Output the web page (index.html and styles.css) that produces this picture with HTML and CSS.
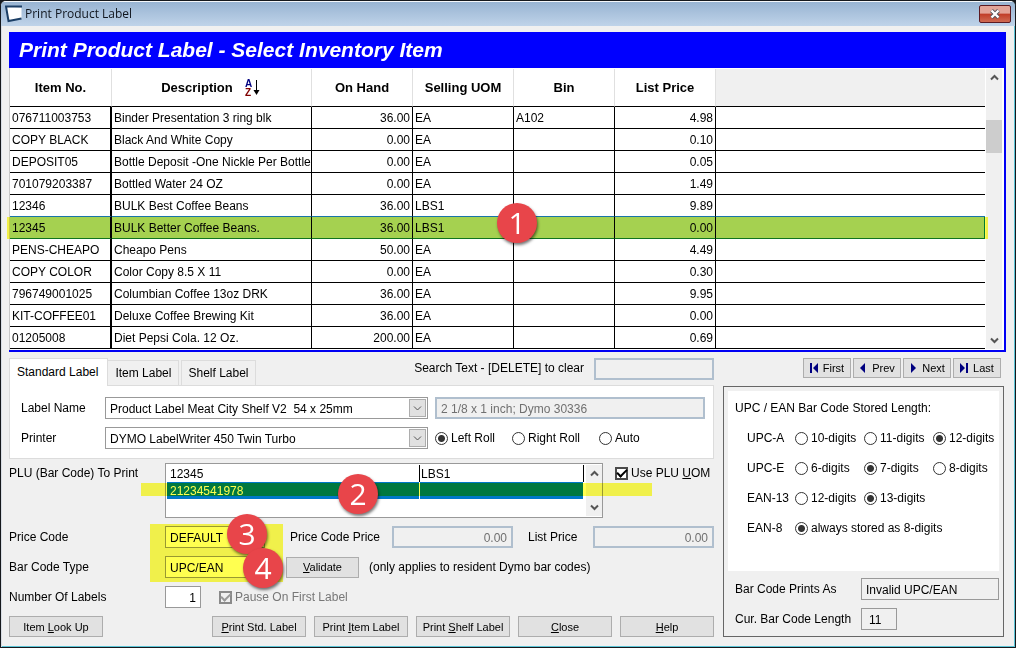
FILE: index.html
```html
<!DOCTYPE html>
<html lang="en">
<head>
<meta charset="utf-8">
<title>Print Product Label</title>
<link rel="stylesheet" href="styles.css">
</head>
<body>
<div class="window">
  <header class="titlebar">
    <svg class="app-icon" width="18" height="18" viewBox="0 0 18 18"><path d="M1.500 1.500L16.500 2.500V14L3.500 16Z" fill="#fff"/><path d="M17 1.500L1 1.500L3.500 16L16.500 13.500" fill="none" stroke="#1c3f66" stroke-width="2"/></svg>
    <span class="window-name">Print Product Label</span>
    <button class="close" aria-label="Close window"><svg width="12" height="10" viewBox="0 0 12 10"><path d="M2.500 1.500L9.500 8.500M9.500 1.500L2.500 8.500" stroke="#54545c" stroke-width="4"/><path d="M2.500 1.500L9.500 8.500M9.500 1.500L2.500 8.500" stroke="#fff" stroke-width="2.400"/></svg></button>
  </header>

  <main class="content">
    <section class="inventory">
      <h1>Print Product Label - Select Inventory Item</h1>
      <div class="list">
        <table class="items">
          <colgroup><col class="c-item"><col class="c-desc"><col class="c-std"><col class="c-std"><col class="c-std"><col class="c-std"><col></colgroup>
          <thead>
            <tr><th>Item No.</th><th><span class="sorted">Description<svg width="17" height="18" viewBox="0 0 17 18"><text x="0" y="8" class="sort-a">A</text><text x="0" y="17" class="sort-z">Z</text><path d="M11.500 1V15" stroke="#000"/><path d="M8.500 11H14.500L11.500 16Z"/></svg></span></th><th>On Hand</th><th>Selling UOM</th><th>Bin</th><th>List Price</th><th class="blank"></th></tr>
          </thead>
          <tbody>
            <tr><td>076711003753</td><td>Binder Presentation 3 ring blk</td><td>36.00</td><td>EA</td><td>A102</td><td>4.98</td><td></td></tr>
            <tr><td>COPY BLACK</td><td>Black And White Copy</td><td>0.00</td><td>EA</td><td></td><td>0.10</td><td></td></tr>
            <tr><td>DEPOSIT05</td><td>Bottle Deposit -One Nickle Per Bottle</td><td>0.00</td><td>EA</td><td></td><td>0.05</td><td></td></tr>
            <tr><td>701079203387</td><td>Bottled Water 24 OZ</td><td>0.00</td><td>EA</td><td></td><td>1.49</td><td></td></tr>
            <tr class="before"><td>12346</td><td>BULK Best Coffee Beans</td><td>36.00</td><td>LBS1</td><td></td><td>9.89</td><td></td></tr>
            <tr class="selected"><td>12345</td><td>BULK Better Coffee Beans.</td><td>36.00</td><td>LBS1</td><td></td><td>0.00</td><td></td></tr>
            <tr><td>PENS-CHEAPO</td><td>Cheapo Pens</td><td>50.00</td><td>EA</td><td></td><td>4.49</td><td></td></tr>
            <tr><td>COPY COLOR</td><td>Color Copy 8.5 X 11</td><td>0.00</td><td>EA</td><td></td><td>0.30</td><td></td></tr>
            <tr><td>796749001025</td><td>Columbian Coffee 13oz DRK</td><td>36.00</td><td>EA</td><td></td><td>9.95</td><td></td></tr>
            <tr><td>KIT-COFFEE01</td><td>Deluxe Coffee Brewing Kit</td><td>36.00</td><td>EA</td><td></td><td>0.00</td><td></td></tr>
            <tr><td>01205008</td><td>Diet Pepsi Cola. 12 Oz.</td><td>200.00</td><td>EA</td><td></td><td>0.69</td><td></td></tr>
          </tbody>
        </table>
        <div class="scrollbar">
          <button aria-label="Scroll up"><svg width="9" height="7" viewBox="0 0 9 7"><path d="M1 5.500L4.500 2L8 5.500"/></svg></button>
          <div class="track"><div class="thumb"></div></div>
          <button aria-label="Scroll down"><svg width="9" height="7" viewBox="0 0 9 7"><path d="M1 1.500L4.500 5L8 1.500"/></svg></button>
        </div>
      </div>
      <div class="marker marker-row"></div>
      <div class="badge badge-1">1</div>
    </section>

    <div class="details">
      <section class="settings">
        <div class="tab-bar">
          <div class="tabs" role="tablist">
            <button class="tab active" role="tab" aria-selected="true">Standard Label</button>
            <button class="tab" role="tab">Item Label</button>
            <button class="tab" role="tab">Shelf Label</button>
          </div>
          <label class="search-label" for="search">Search Text - [DELETE] to clear</label>
          <input id="search" class="field locked search" type="text">
        </div>
        <div class="tab-panel">
          <label for="label-name">Label Name</label>
          <div class="combo"><select id="label-name"><option>Product Label Meat City Shelf V2 &nbsp;54 x 25mm</option></select><span class="combo-arrow"><svg width="9" height="7" viewBox="0 0 9 7"><path d="M1 1.500L4.500 5L8 1.500"/></svg></span></div>
          <input class="field locked" type="text" aria-label="Label size" value="2 1/8 x 1 inch; Dymo 30336" readonly>
          <label for="printer">Printer</label>
          <div class="combo"><select id="printer"><option>DYMO LabelWriter 450 Twin Turbo</option></select><span class="combo-arrow"><svg width="9" height="7" viewBox="0 0 9 7"><path d="M1 1.500L4.500 5L8 1.500"/></svg></span></div>
          <div class="rolls">
            <label class="choice"><input type="radio" name="roll" checked>Left Roll</label>
            <label class="choice"><input type="radio" name="roll">Right Roll</label>
            <label class="choice"><input type="radio" name="roll">Auto</label>
          </div>
        </div>

        <div class="form">
          <div class="row plu-row">
            <span class="caption">PLU (Bar Code) To Print</span>
            <div class="plu">
              <table>
                <colgroup><col class="c-plu"><col></colgroup>
                <tr><td>12345</td><td>LBS1</td></tr>
                <tr class="current"><td>21234541978</td><td></td></tr>
              </table>
              <div class="scrollbar">
                <button aria-label="PLU up"><svg width="9" height="7" viewBox="0 0 9 7"><path d="M1 5.500L4.500 2L8 5.500"/></svg></button>
                <div class="track"></div>
                <button aria-label="PLU down"><svg width="9" height="7" viewBox="0 0 9 7"><path d="M1 1.500L4.500 5L8 1.500"/></svg></button>
              </div>
            </div>
            <label class="choice uom"><input type="checkbox" checked><span>Use PLU <u>U</u>OM</span></label>
          </div>
          <div class="row">
            <label class="caption" for="price-code">Price Code</label>
            <input id="price-code" class="field code" type="text" value="DEFAULT">
            <label class="price-label" for="code-price">Price Code Price</label>
            <input id="code-price" class="field locked price" type="text" value="0.00" readonly>
            <label class="list-label" for="list-price">List Price</label>
            <input id="list-price" class="field locked price" type="text" value="0.00" readonly>
          </div>
          <div class="row">
            <label class="caption" for="code-type">Bar Code Type</label>
            <input id="code-type" class="field code" type="text" value="UPC/EAN">
            <button class="btn validate"><span><u>V</u>alidate</span></button>
            <span>(only applies to resident Dymo bar codes)</span>
          </div>
          <div class="row">
            <label class="caption" for="count">Number Of Labels</label>
            <input id="count" class="field count" type="text" value="1">
            <label class="choice pause"><input type="checkbox" checked disabled>Pause On First Label</label>
          </div>
          <div class="row actions">
            <button class="btn"><span>Item <u>L</u>ook Up</span></button>
            <div class="action-group">
              <button class="btn"><span><u>P</u>rint Std. Label</span></button>
              <button class="btn"><span>Print <u>I</u>tem Label</span></button>
              <button class="btn"><span>Print <u>S</u>helf Label</span></button>
              <button class="btn"><span><u>C</u>lose</span></button>
              <button class="btn"><span><u>H</u>elp</span></button>
            </div>
          </div>
        </div>
        <div class="marker marker-plu"></div>
        <div class="marker marker-codes"></div>
        <div class="badge badge-2">2</div>
        <div class="badge badge-3">3</div>
        <div class="badge badge-4">4</div>
      </section>

      <aside class="side">
        <nav class="pager">
          <button class="btn nav"><svg width="9" height="10" viewBox="0 0 9 10"><path d="M0 0H2V10H0ZM8 0V10L3 5Z"/></svg>First</button>
          <button class="btn nav"><svg width="9" height="10" viewBox="0 0 9 10"><path d="M6 0V10L1 5Z"/></svg>Prev</button>
          <button class="btn nav"><svg width="9" height="10" viewBox="0 0 9 10"><path d="M2 0V10L7 5Z"/></svg>Next</button>
          <button class="btn nav"><svg width="9" height="10" viewBox="0 0 9 10"><path d="M0 0V10L5 5ZM6 0H8V10H6Z"/></svg>Last</button>
        </nav>
        <div class="barcode">
          <div class="lengths">
            <h2>UPC / EAN Bar Code Stored Length:</h2>
            <div class="length-grid">
              <span>UPC-A</span>
              <label class="choice"><input type="radio" name="upca">10-digits</label>
              <label class="choice"><input type="radio" name="upca">11-digits</label>
              <label class="choice"><input type="radio" name="upca" checked>12-digits</label>
              <span>UPC-E</span>
              <label class="choice"><input type="radio" name="upce">6-digits</label>
              <label class="choice"><input type="radio" name="upce" checked>7-digits</label>
              <label class="choice"><input type="radio" name="upce">8-digits</label>
              <span>EAN-13</span>
              <label class="choice"><input type="radio" name="ean13">12-digits</label>
              <label class="choice last"><input type="radio" name="ean13" checked>13-digits</label>
              <span>EAN-8</span>
              <label class="choice wide"><input type="radio" name="ean8" checked>always stored as 8-digits</label>
            </div>
          </div>
          <div class="results">
            <label for="prints-as">Bar Code Prints As</label>
            <input id="prints-as" class="field result" type="text" value="Invalid UPC/EAN" readonly>
            <label for="cur-length">Cur. Bar Code Length</label>
            <input id="cur-length" class="field result short" type="text" value="11" readonly>
          </div>
        </div>
      </aside>
    </div>
  </main>
</div>
</body>
</html>
```
FILE: styles.css
```css
* { box-sizing: border-box; }
body {
  margin: 0;
  background: #15181c;
  color: #000;
  font: 12px/16px "Liberation Sans", Arial, sans-serif;
}
button, input, select { margin: 0; font: inherit; color: inherit; border-radius: 0; }
button { padding: 0; }
h1, h2 { margin: 0; }
svg { flex: none; }

/* Window frame */
.window {
  min-height: 100vh;
  background: #f0f0f0;
  border: 1px solid #15181c;
  border-radius: 6px 6px 0 0;
  box-shadow: inset 1px 0 #d8dde4, inset -1px -1px #5bc4d6;
  overflow: hidden;
}
.titlebar {
  display: flex;
  align-items: center;
  height: 25px;
  padding: 0 4px;
  border-top: 1px solid #f4f7fa;
  background: linear-gradient(#98b4d2, #bfd3e9);
}
.window-name {
  flex: 1;
  padding-left: 2px;
  font: 12px/20px "Open Sans", sans-serif;
  color: #10161e;
}
.close {
  display: grid;
  place-items: center;
  width: 32px;
  height: 18px;
  border: 1px solid #5c1a22;
  border-radius: 2px;
  background: linear-gradient(#e3a498 0 45%, #c13d28 50%, #cf6a52);
}
.content { padding: 6px 9px 8px 8px; }

/* Inventory list */
.inventory { position: relative; border: solid #0000f4; border-width: 0 2px 2px 0; }
h1 {
  padding-left: 10px;
  background: #00f;
  color: #fff;
  font: italic bold 21px/36px "Liberation Sans", Arial, sans-serif;
}
.list {
  display: flex;
  gap: 1px;
  padding: 1px 2px 1px 0;
  border-left: 1px solid #c8c8c8;
  background: #fff;
}
table { border-spacing: 0; table-layout: fixed; }
.items { flex: 1; width: 0; }
.c-item { width: 102px; }
.c-desc { width: 200px; }
.c-std { width: 101px; }
.items th {
  height: 38px;
  padding: 0;
  border-right: 1px solid #e0e0e0;
  border-bottom: 1px solid #000;
  font-size: 13px;
}
.items th.blank { background: #f0f0f0; border-right: 0; }
.sorted { display: inline-flex; align-items: center; gap: 12px; }
.sort-a { font: bold 10px "Liberation Sans", sans-serif; fill: #000080; }
.sort-z { font: bold 10px "Liberation Sans", sans-serif; fill: #800000; }
.items td {
  height: 22px;
  padding: 0 2px;
  border-right: 1px solid #000;
  border-bottom: 1px solid #000;
  white-space: nowrap;
  overflow: hidden;
}
.items td:first-child { border-right-width: 2px; }
.items td:last-child { border-right: 0; }
.items td:nth-child(3), .items td:nth-child(6) { text-align: right; }
.items .before td { border-bottom-color: #1874a8; }
.items .selected td { background: #a5d1ff; border-bottom-color: #10745f; }
.items .selected td:last-child { border-right: 1px solid #0078a0; }
.scrollbar { display: flex; flex-direction: column; width: 16px; background: #f0f0f0; }
.scrollbar button {
  display: grid;
  place-items: center;
  height: 17px;
  border: 0;
  background: none;
}
.scrollbar path, .combo-arrow path { fill: none; stroke: #555; stroke-width: 2; }
.combo-arrow path { stroke-width: 1; }
.track { flex: 1; padding-top: 34px; }
.thumb { height: 33px; background: #cdcdcd; }
.plu .track { padding: 0; }

/* Call-outs laid over the form */
.marker { position: absolute; background: #ffff50; mix-blend-mode: multiply; pointer-events: none; }
.badge {
  position: absolute;
  width: 40px;
  height: 40px;
  border-radius: 50%;
  background: #e8454a;
  box-shadow: 1px 2px 3px #0008;
  color: #fff;
  font: 500 30px/40px "Open Sans", sans-serif;
  text-align: center;
}
.marker-row { left: -2px; right: 16px; top: 185px; height: 22px; }
.badge-1 { left: 488px; top: 171px; }
.marker-plu { left: 132px; top: 125px; width: 511px; height: 13px; }
.marker-codes { left: 141px; top: 166px; width: 133px; height: 58px; }
.badge-2 { left: 329px; top: 116px; }
.badge-3 { left: 218px; top: 156px; }
.badge-4 { left: 234px; top: 190px; }

/* Shared controls */
.field { height: 22px; min-width: 0; padding: 1px 4px 0; border: 1px solid #999; background: #fff; }
.locked { border: 2px solid #b0bfce; background: #f0f0f0; color: #707070; }
.price { width: 121px; text-align: right; }
.search { width: 120px; }
.combo { position: relative; }
.combo select {
  width: 100%;
  height: 22px;
  padding: 1px 20px 0 4px;
  border: 1px solid #999;
  background: #fff;
  appearance: none;
}
.combo-arrow {
  position: absolute;
  top: 2px;
  right: 2px;
  bottom: 2px;
  display: grid;
  place-items: center;
  width: 17px;
  border: 1px solid #adadad;
  background: #e1e1e1;
  pointer-events: none;
}
.choice { display: flex; align-items: center; gap: 3px; white-space: nowrap; }
.choice input { appearance: none; flex: none; width: 13px; height: 13px; background: #fff; }
.choice input[type="radio"] { border: 1px solid #333; border-radius: 50%; }
.choice input[type="radio"]:checked { background: radial-gradient(circle, #333 0 3px, #fff 4px); }
.choice input[type="checkbox"] { display: grid; place-items: center; border: 2px solid #4a4a4a; }
.choice input[type="checkbox"]:checked::before {
  content: "";
  width: 8px;
  height: 4px;
  margin-bottom: 2px;
  border: solid #000;
  border-width: 0 0 2px 2px;
  transform: rotate(-45deg);
}
.choice input:disabled { border-color: #8a8a8a; background: #f0f0f0; }
.choice input[type="checkbox"]:disabled::before { border-color: #999; }
.btn {
  width: 94px;
  height: 21px;
  border: 1px solid #adadad;
  background: #e1e1e1;
  font-size: 11px;
  white-space: nowrap;
}

/* Lower half */
.details { display: flex; gap: 9px; padding: 6px 2px 0 0; }
.settings { position: relative; flex: 1; }
.tab-bar { display: flex; align-items: flex-start; height: 27px; }
.tabs { display: flex; align-items: flex-end; height: 28px; margin-right: auto; }
.tab { height: 26px; padding: 0 7px; border: 1px solid #dcdcdc; border-left: 0; background: #f0f0f0; }
.tab + .tab + .tab { margin-left: 2px; padding: 0 6px; border-left: 1px solid #dcdcdc; }
.tab.active {
  z-index: 1;
  height: 28px;
  padding: 0 9px 2px 7px;
  border-left: 1px solid #dcdcdc;
  border-bottom: 0;
  background: #fff;
}
.search-label { padding: 2px 10px 0 0; }
.tab-panel {
  display: grid;
  grid-template-columns: 84px 323px 1fr;
  gap: 8px 0;
  align-items: center;
  padding: 11px 8px 9px 11px;
  border: 1px solid #dcdcdc;
  background: #fff;
}
.tab-panel > .field, .rolls { margin-left: 7px; }
.tab-panel label { white-space: nowrap; }
.rolls { display: grid; grid-template-columns: 77px 87px auto; }
.form { display: flex; flex-direction: column; gap: 8px; padding-top: 4px; }
.row { display: flex; align-items: center; }
.caption { flex: none; width: 156px; }
.plu-row { align-items: flex-start; }
.plu-row .caption, .uom { padding-top: 2px; }
.plu {
  display: flex;
  gap: 2px;
  width: 438px;
  height: 55px;
  padding: 1px 0 1px 1px;
  border: 1px solid #999;
  background: #fff;
}
.plu table { flex: 1; width: 0; height: 34px; }
.c-plu { width: 253px; }
.plu td { height: 17px; padding: 0 1px; border-right: 1px solid #000; line-height: 16px; }
.plu td:first-child { padding-left: 3px; }
.plu .current td { background: #0078c8; color: #fff; border-right-color: #fff; }
.uom { margin-left: 12px; }
.code { width: 100px; }
.price-label { width: 102px; margin-left: 25px; }
.list-label { width: 65px; margin-left: 15px; }
.validate { width: 73px; margin: 0 10px 0 21px; }
.count { width: 36px; text-align: right; }
.pause { margin-left: 18px; color: #777; }
.actions { justify-content: space-between; }
.action-group { display: flex; gap: 8px; }

/* Bar code panel */
.side { display: flex; flex-direction: column; width: 281px; gap: 8px; }
.pager { display: flex; justify-content: flex-end; gap: 2px; padding-right: 3px; }
.nav { display: flex; align-items: center; justify-content: center; gap: 4px; width: 48px; height: 20px; }
.nav path { fill: #000080; }
.barcode { flex: 1; padding: 4px; border: 1px solid #666; }
.lengths { min-height: 180px; padding: 2px 0 0 7px; background: #fff; }
h2 { font: 12px/30px "Liberation Sans", Arial, sans-serif; }
.length-grid {
  display: grid;
  grid-template-columns: 48px 69px 69px auto;
  grid-auto-rows: 30px;
  align-items: center;
  padding-left: 12px;
}
.last { grid-column: 3 / 5; }
.wide { grid-column: 2 / 5; }
.results {
  display: grid;
  grid-template-columns: 126px 1fr;
  gap: 8px 0;
  align-items: center;
  padding: 7px 0 2px 7px;
}
.result { background: #f0f0f0; }
.short { width: 36px; padding: 1px 7px 0; }
```
